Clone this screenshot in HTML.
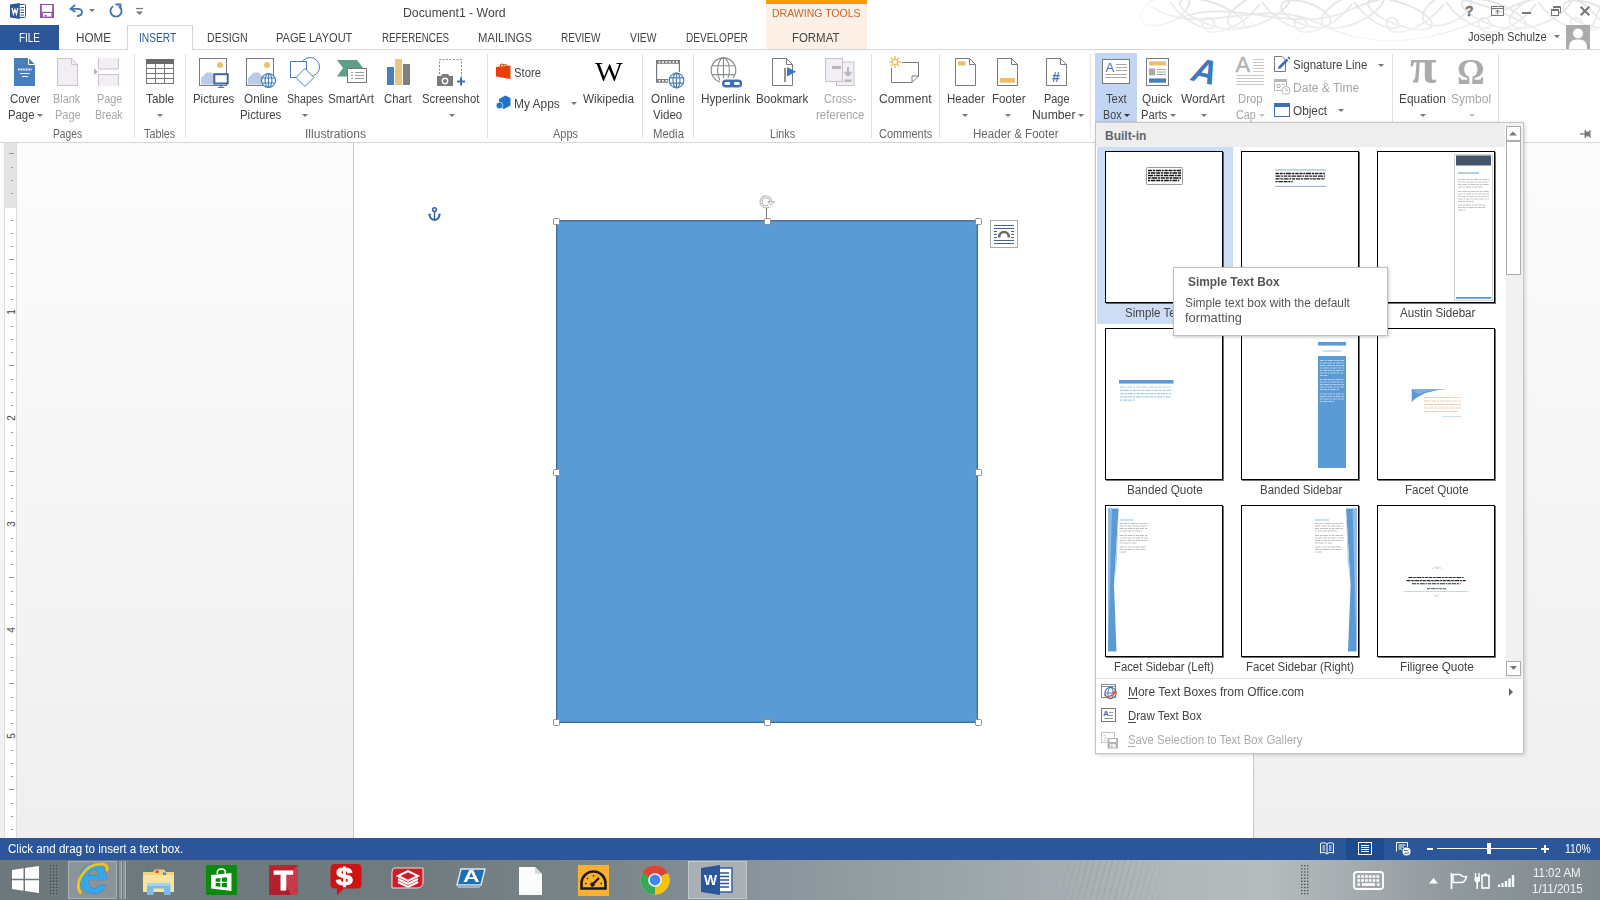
<!DOCTYPE html>
<html lang="en">
<head>
<meta charset="utf-8">
<title>Document1 - Word</title>
<style>
html,body{margin:0;padding:0;}
body{width:1600px;height:900px;overflow:hidden;position:relative;background:#fff;
  font-family:"Liberation Sans",sans-serif;font-size:12px;color:#444;}
.a{position:absolute;}
.t{position:absolute;white-space:nowrap;line-height:14px;height:14px;transform-origin:0 50%;}
.c{text-align:center;}
.dis{color:#a6a6a6;}
svg{position:absolute;overflow:visible;}
/* ---------- title + tabs ---------- */
#titlebar{left:0;top:0;width:1600px;height:50px;background:#fff;}
#ctx{left:766px;top:0;width:101px;height:49px;background:#fdf0e6;}
#ctxband{left:766px;top:0;width:101px;height:4px;background:#fd9a00;}
#tabline{left:0;top:49px;width:1600px;height:1px;background:#d5d5d5;}
#filetab{left:0;top:25px;width:59px;height:25px;background:#2b579a;}
#instab{left:127px;top:25px;width:64px;height:25px;background:#fff;border:1px solid #d5d5d5;border-bottom:none;}
.tab{top:31px;font-size:12px;color:#444;}
/* ---------- ribbon ---------- */
#ribbon{left:0;top:50px;width:1600px;height:92px;background:#fff;}
#ribline{left:0;top:142px;width:1600px;height:1px;background:#d5d5d5;}
.sep{position:absolute;top:54px;width:1px;height:84px;background:#e1e1e1;}
.gl{top:127px;color:#666;}
.rl{color:#444;}
/* ---------- document ---------- */
#doc{left:0;top:143px;width:1600px;height:695px;background:linear-gradient(#fcfcfc,#efefef);}
#page{left:353px;top:143px;width:901px;height:695px;background:#fff;border-left:1px solid #c6c6c6;border-right:1px solid #c6c6c6;box-sizing:border-box;}
#rightbg{left:1254px;top:143px;width:346px;height:695px;background:#efefef;}
#shape{left:556px;top:220px;width:422px;height:503px;background:#5b9bd5;border:1px solid #41719c;box-sizing:border-box;box-shadow:inset 0 0 0 1px rgba(65,113,156,.45);}
.h{position:absolute;width:5px;height:5px;background:#fff;border:1px solid #8f8f8f;border-radius:1.5px;}
/* ---------- status + taskbar ---------- */
#status{left:0;top:838px;width:1600px;height:22px;background:#2b579a;}
#task{left:0;top:860px;width:1600px;height:40px;background:#6f7b80;}
/* ---------- dropdown ---------- */
#dd{left:1095px;top:122px;width:427px;height:630px;background:#fff;border:1px solid #c6c6c6;box-shadow:1px 1px 4px rgba(0,0,0,.18);}
#ddhead{left:1096px;top:123px;width:409px;height:24px;background:#eeeeee;}
#ddsel{left:1097px;top:147px;width:136px;height:177px;background:#cdddf3;}
.th{position:absolute;width:116px;height:150px;border:1px solid #000;background:#fff;box-sizing:content-box;box-shadow:1px 1px 0 rgba(0,0,0,.55);}
.thl{color:#444;font-size:12px;}
</style>
</head>
<body>
<!-- TITLE BAR / TABS -->
<div class="a" id="titlebar"></div>
<div class="a" id="ctx"></div>
<div class="a" id="ctxband"></div>
<div class="a" id="tabline"></div>
<div class="a" id="filetab"></div>
<div class="a" id="instab"></div>

<!-- swirl decoration (faint) -->
<svg class="a" style="left:0;top:0" width="1600" height="49" viewBox="0 0 1600 49" fill="none" stroke="#e4e4e4" stroke-width="1.8">
<defs><linearGradient id="swf" x1="0" y1="0" x2="0" y2="1"><stop offset="0" stop-color="#fff" stop-opacity="0"/><stop offset=".55" stop-color="#fff" stop-opacity=".35"/><stop offset="1" stop-color="#fff" stop-opacity="1"/></linearGradient><linearGradient id="swl" x1="0" y1="0" x2="1" y2="0"><stop offset="0" stop-color="#fff" stop-opacity="1"/><stop offset="1" stop-color="#fff" stop-opacity="0"/></linearGradient></defs>
<ellipse cx="1165" cy="9" rx="26" ry="14" transform="rotate(-25 1165 9)"/>
<ellipse cx="1212" cy="14" rx="34" ry="11" transform="rotate(20 1212 14)"/>
<ellipse cx="1259" cy="9" rx="34" ry="14" transform="rotate(-25 1259 9)"/>
<ellipse cx="1306" cy="14" rx="26" ry="11" transform="rotate(20 1306 14)"/>
<ellipse cx="1353" cy="9" rx="34" ry="14" transform="rotate(-25 1353 9)"/>
<ellipse cx="1400" cy="14" rx="34" ry="11" transform="rotate(20 1400 14)"/>
<ellipse cx="1447" cy="9" rx="26" ry="14" transform="rotate(-25 1447 9)"/>
<ellipse cx="1494" cy="14" rx="34" ry="11" transform="rotate(20 1494 14)"/>
<ellipse cx="1541" cy="9" rx="34" ry="14" transform="rotate(-25 1541 9)"/>
<ellipse cx="1588" cy="14" rx="26" ry="11" transform="rotate(20 1588 14)"/>
<path d="M1170 2C1190 30 1220 34 1214 22C1210 14 1198 18 1204 28C1210 38 1240 30 1260 4"/>
<path d="M1262 2C1282 30 1312 34 1306 22C1302 14 1290 18 1296 28C1302 38 1332 30 1352 4"/>
<path d="M1354 2C1374 30 1404 34 1398 22C1394 14 1382 18 1388 28C1394 38 1424 30 1444 4"/>
<path d="M1446 2C1466 30 1496 34 1490 22C1486 14 1474 18 1480 28C1486 38 1516 30 1536 4"/>
<path d="M1538 2C1558 30 1588 34 1582 22C1578 14 1566 18 1572 28C1578 38 1608 30 1628 4"/>
<path d="M1150 6C1200 40 1260 -6 1320 24S1440 40 1500 12S1580 -4 1600 20"/>
<path d="M1170 22C1230 -8 1290 38 1350 10S1470 -6 1530 26S1590 30 1600 8"/>
<rect x="1120" y="0" width="480" height="49" fill="url(#swf)" stroke="none"/><rect x="1120" y="0" width="70" height="49" fill="url(#swl)" stroke="none"/></svg>
<!-- QAT icons -->
<svg style="left:10px;top:3px" width="17" height="16" viewBox="0 0 17 16">
 <rect x="8" y="1.5" width="7.5" height="13" rx="1" fill="#fff" stroke="#2b579a" stroke-width="1"/>
 <path d="M10.5 4.5h3.5M10.5 7h3.5M10.5 9.5h3.5M10.5 12h3.5" stroke="#2b579a" stroke-width="1"/>
 <path d="M0 1.4 L9.8 0 V16 L0 14.6 Z" fill="#2b579a"/>
 <path d="M2 5 L3.4 11 L4.9 6.3 L6.4 11 L7.8 5" stroke="#fff" stroke-width="1.3" fill="none"/>
</svg>
<svg style="left:40px;top:4px" width="14" height="14" viewBox="0 0 14 14">
 <path d="M0 0H14V14H0Z" fill="#9551a8"/>
 <rect x="1.8" y="1" width="10.4" height="6.8" fill="#fff"/>
 <rect x="2.8" y="9" width="8.6" height="3.6" fill="#fff"/>
 <rect x="5" y="11" width="1.8" height="1.6" fill="#9551a8"/>
</svg>
<svg style="left:69px;top:4px" width="15" height="13" viewBox="0 0 15 13" fill="none" stroke="#4472b4" stroke-width="1.8">
 <path d="M6 0.8 L1.5 4.8 L6.5 8"/><path d="M1.5 4.8 H9 C14.5 4.8 14.5 12 8 12"/>
</svg>
<svg style="left:89px;top:9px" width="6" height="3" viewBox="0 0 6 3"><path d="M0 0H6L3 3Z" fill="#777"/></svg>
<svg style="left:109px;top:3px" width="14" height="14" viewBox="0 0 14 14" fill="none" stroke="#4472b4" stroke-width="1.8">
 <path d="M4.2 3.2 A5.6 5.6 0 1 0 9.8 3.2"/><path d="M6.5 1.5 H11.5 V6.5" />
</svg>
<svg style="left:136px;top:8px" width="7" height="8" viewBox="0 0 7 8"><path d="M0 0.5H7" stroke="#777" stroke-width="1.2"/><path d="M0 3.5H7L3.5 7Z" fill="#777"/></svg>
<!-- window controls -->
<span class="t" style="left:1465px;top:4px;font-size:14px;font-weight:bold;color:#777;-webkit-text-stroke:.4px #777">?</span>
<svg style="left:1491px;top:6px" width="13" height="10" viewBox="0 0 13 10" fill="none" stroke="#777" stroke-width="1">
 <rect x=".5" y=".5" width="12" height="9"/><path d="M.5 2.5H12.5M6.5 8.5V4M4.5 6L6.5 4L8.5 6"/>
</svg>
<div class="a" style="left:1522px;top:12px;width:9px;height:2px;background:#777"></div>
<svg style="left:1551px;top:6px" width="10" height="10" viewBox="0 0 10 10" fill="none" stroke="#777" stroke-width="1">
 <path d="M2.5 2.5V.5H9.5V6.5H7.5"/><path d="M2.5 1.5H9.5" /><rect x=".5" y="3.5" width="7" height="6"/><path d="M.5 4.5H7.5"/>
</svg>
<svg style="left:1580px;top:6px" width="10" height="10" viewBox="0 0 10 10" stroke="#777" stroke-width="2.1"><path d="M.7 .7L9.3 9.3M9.3 .7L.7 9.3"/></svg>
<svg style="left:1554px;top:35px" width="6" height="3" viewBox="0 0 6 3"><path d="M0 0H6L3 3Z" fill="#777"/></svg>
<svg style="left:1566px;top:25px" width="24" height="24" viewBox="0 0 24 24">
 <rect width="24" height="24" fill="#ababab"/>
 <circle cx="12" cy="8.5" r="5" fill="#fff"/>
 <path d="M3 24 C3 15 7 14.5 12 14.5 S21 15 21 24Z" fill="#fff"/>
</svg>
<span class="t" style="left:403.00px;transform:scaleX(1.022);top:6px;">Document1 - Word</span>
<span class="t" style="left:772.20px;transform:scaleX(1.001);top:6px;font-size:10.5px;color:#c8672a;">DRAWING TOOLS</span>
<span class="t" style="left:19.00px;transform:scaleX(0.829);top:31px;color:#fff;">FILE</span>
<span class="t" style="left:76.00px;transform:scaleX(0.972);top:31px;">HOME</span>
<span class="t" style="left:139.15px;transform:scaleX(0.851);top:31px;color:#2b579a;">INSERT</span>
<span class="t" style="left:207.00px;transform:scaleX(0.882);top:31px;">DESIGN</span>
<span class="t" style="left:276.00px;transform:scaleX(0.921);top:31px;">PAGE LAYOUT</span>
<span class="t" style="left:382.00px;transform:scaleX(0.817);top:31px;">REFERENCES</span>
<span class="t" style="left:478.00px;transform:scaleX(0.942);top:31px;">MAILINGS</span>
<span class="t" style="left:561.00px;transform:scaleX(0.833);top:31px;">REVIEW</span>
<span class="t" style="left:630.00px;transform:scaleX(0.861);top:31px;">VIEW</span>
<span class="t" style="left:686.00px;transform:scaleX(0.841);top:31px;">DEVELOPER</span>
<span class="t" style="left:792.00px;transform:scaleX(0.952);top:31px;">FORMAT</span>
<span class="t" style="left:1468.00px;transform:scaleX(0.929);top:30px;">Joseph Schulze</span>

<!-- RIBBON -->
<div class="a" id="ribbon"></div>
<div class="a" id="ribline"></div>
<div class="sep" style="left:134px"></div>
<div class="sep" style="left:185px"></div>
<div class="sep" style="left:487px"></div>
<div class="sep" style="left:642px"></div>
<div class="sep" style="left:693px"></div>
<div class="sep" style="left:871px"></div>
<div class="sep" style="left:939px"></div>
<div class="sep" style="left:1090px"></div>
<div class="sep" style="left:1392px"></div>
<div class="sep" style="left:1498px"></div>
<div class="a" style="left:1095px;top:53px;width:42px;height:71px;background:#c2d5f2"></div>
<svg style="left:14px;top:58px" width="21" height="28" viewBox="0 0 21 28" ><path d="M0 0H14.5L21 6.5V28H0Z" fill="#4a7ebb"/><path d="M14.5 0V6.5H21" fill="none" stroke="#fff" stroke-width="1"/><path d="M4 11.5H17.5" stroke="#fff" stroke-width="2" stroke-dasharray="1 .6"/><path d="M6 15.5H15.5M8 18.5H14" stroke="#fff" stroke-width="1"/></svg>
<svg style="left:57px;top:58px" width="21" height="28" viewBox="0 0 21 28" ><path d="M.5 .5H14.5L20.5 6.5V27.5H.5Z" fill="#f3eef5" stroke="#c9c4cb"/><path d="M14.5 .5V6.5H20.5" fill="none" stroke="#c9c4cb"/></svg>
<svg style="left:94px;top:58px" width="25" height="28" viewBox="0 0 25 28" ><path d="M4.5 0V11H24.5V0" fill="#f3eef5" stroke="#c9c4cb"/><path d="M4.5 28V16.5H24.5V28" fill="#f3eef5" stroke="#c9c4cb"/><path d="M0 10.5L4 13.8L0 17Z" fill="#b5b5b5"/></svg>
<svg style="left:146px;top:59px" width="28" height="25" viewBox="0 0 28 25" ><rect x=".5" y=".5" width="27" height="24" fill="#fff" stroke="#7a7a7a"/><rect x="0" y="0" width="28" height="5" fill="#6a6a6a"/><path d="M9.5 5V24M18.5 5V24M0 9.5H28M0 14.5H28M0 19.5H28" stroke="#7a7a7a" fill="none"/></svg>
<svg style="left:199px;top:58px" width="31" height="31" viewBox="0 0 31 31" ><rect x=".5" y=".5" width="27" height="27" fill="#fff" stroke="#7a7a7a"/><circle cx="21" cy="7" r="3" fill="#ebc06d"/><path d="M2 26.5V20L7.5 14.5H12.5L18.5 20.5V26.5Z" fill="#b9cbe6"/><rect x="15.3" y="16.2" width="13.4" height="9.3" fill="#fff" stroke="#41659c" stroke-width="2"/><path d="M22 26.5V29M18.8 29.4H25.2" stroke="#41659c" stroke-width="1"/></svg>
<svg style="left:246px;top:58px" width="31" height="31" viewBox="0 0 31 31" ><rect x=".5" y=".5" width="27" height="27" fill="#fff" stroke="#7a7a7a"/><circle cx="21" cy="7" r="3" fill="#ebc06d"/><path d="M2 26.5V20L7.5 14.5H12.5L18.5 20.5V26.5Z" fill="#b9cbe6"/><circle cx="22.5" cy="22.5" r="7" fill="#fff" stroke="#4a7ebb" stroke-width="1.2"/><ellipse cx="22.5" cy="22.5" rx="3.4" ry="7" fill="none" stroke="#4a7ebb" stroke-width="1.2"/><path d="M22.5 15.5V29.5M16.0 20.0H29.0M16.0 25.0H29.0" stroke="#4a7ebb" stroke-width="1.2" fill="none"/></svg>
<svg style="left:290px;top:56px" width="30" height="32" viewBox="0 0 30 32" ><circle cx="20" cy="11" r="9.5" fill="#fff" stroke="#4a7ebb"/><rect x=".5" y="5.5" width="16" height="16" fill="#fff" stroke="#4a7ebb"/><path d="M15 12.5L24 21.5L15 30.5L6 21.5Z" fill="#fff" stroke="#4a7ebb"/></svg>
<svg style="left:337px;top:60px" width="31" height="24" viewBox="0 0 31 24" ><path d="M0 0H20L26 8L20 16.5H0L6 8Z" fill="#5f9e8b"/><rect x="10.5" y="8.5" width="19" height="14" fill="#fff" stroke="#7a7a7a"/><path d="M14 12.5H16M18 12.5H27M14 15.5H16M18 15.5H27M14 18.5H16M18 18.5H27" stroke="#9a9a9a"/></svg>
<svg style="left:387px;top:59px" width="23" height="26" viewBox="0 0 23 26" ><rect x="0" y="8" width="7" height="18" fill="#4a7ebb"/><rect x="8" y="0" width="7" height="26" fill="#ebc47d"/><rect x="16" y="5" width="7" height="21" fill="#7f7f7f"/></svg>
<svg style="left:437px;top:59px" width="29" height="27" viewBox="0 0 29 27" ><path d="M2.5 15V.5H24.5V22" fill="none" stroke="#8a8a8a" stroke-dasharray="2 1.5"/><path d="M0 17H4L5.5 15H11L12.5 17H16V27H0Z" fill="#7a7a7a"/><circle cx="8" cy="22" r="2.7" fill="none" stroke="#fff" stroke-width="1.4"/><path d="M20 22.5H28M24 18.5V26.5" stroke="#3e6db5" stroke-width="2"/></svg>
<svg style="left:496px;top:63px" width="15" height="17" viewBox="0 0 15 17" ><path d="M4.5 4V2.5C4.5 .5 7.5 .5 7.5 2.5V3M7.5 3C7.5 1 10.5 1 10.5 3V4" fill="none" stroke="#e8400c" stroke-width="1.2"/><path d="M0 4L14.5 2.5V16L0 13.5Z" fill="#e8400c"/></svg>
<svg style="left:496px;top:95px" width="15" height="15" viewBox="0 0 15 15" ><path d="M3 4L9.5 .5L14.5 3V10.5L8 14L3 11.5Z" fill="#1e74c8"/><circle cx="3.5" cy="10.5" r="3.3" fill="#1e74c8" stroke="#fff" stroke-width=".6"/></svg>
<span class="t" style="left:595px;top:57px;font-family:'Liberation Serif',serif;font-size:28px;line-height:30px;height:30px;color:#000;transform:scaleX(1.05)">W</span>
<svg style="left:656px;top:60px" width="32" height="29" viewBox="0 0 32 29" ><path d="M0 0H24V3.8H0ZM0 18.9H12V22.7H0Z" fill="#7a7a7a"/><path d="M.6 0V22M23.4 0V12" stroke="#7a7a7a" stroke-width="1.2"/><rect x="2.6" y="1.1" width="1.7" height="1.7" fill="#fff"/><rect x="6.1" y="1.1" width="1.7" height="1.7" fill="#fff"/><rect x="9.6" y="1.1" width="1.7" height="1.7" fill="#fff"/><rect x="13.1" y="1.1" width="1.7" height="1.7" fill="#fff"/><rect x="16.6" y="1.1" width="1.7" height="1.7" fill="#fff"/><rect x="20.1" y="1.1" width="1.7" height="1.7" fill="#fff"/><rect x="2.6" y="20" width="1.7" height="1.7" fill="#fff"/><rect x="6.1" y="20" width="1.7" height="1.7" fill="#fff"/><rect x="9.6" y="20" width="1.7" height="1.7" fill="#fff"/><circle cx="20.5" cy="20.5" r="7.3" fill="#fff" stroke="#4a7ebb" stroke-width="1.2"/><ellipse cx="20.5" cy="20.5" rx="3.5" ry="7.3" fill="none" stroke="#4a7ebb" stroke-width="1.2"/><path d="M20.5 13.2V27.8M13.7 17.9H27.3M13.7 23.1H27.3" stroke="#4a7ebb" stroke-width="1.2" fill="none"/></svg>
<svg style="left:710px;top:57px" width="34" height="32" viewBox="0 0 34 32" ><circle cx="13.5" cy="13.2" r="12.3" fill="#fff" stroke="#8a8a8a" stroke-width="1.1"/><ellipse cx="13.5" cy="13.2" rx="5.9" ry="12.3" fill="none" stroke="#8a8a8a" stroke-width="1.1"/><path d="M13.5 0.8999999999999986V25.5M2.1 8.8H24.9M2.1 17.6H24.9" stroke="#8a8a8a" stroke-width="1.1" fill="none"/><rect x="10" y="21" width="24" height="11" fill="#fff"/><rect x="13.2" y="23.7" width="10" height="5.6" rx="2.8" fill="none" stroke="#3e6fb0" stroke-width="2.4"/><rect x="21" y="23.7" width="10" height="5.6" rx="2.8" fill="none" stroke="#3e6fb0" stroke-width="2.4"/></svg>
<svg style="left:772px;top:58px" width="21" height="28" viewBox="0 0 21 28" ><path d="M.5 .5H14.5L20.5 6.5V27.5H.5Z" fill="#fff" stroke="#7a7a7a"/><path d="M14.5 .5V6.5H20.5" fill="none" stroke="#7a7a7a"/><path d="M13 10V24" stroke="#7a7a7a" stroke-width="1.6"/></svg>
<svg style="left:787px;top:67px" width="9" height="10" viewBox="0 0 9 10" ><path d="M0 0L9 4.7L0 9.4Z" fill="#3b78c3"/></svg>
<svg style="left:825px;top:58px" width="30" height="28" viewBox="0 0 30 28" ><rect x="11.5" y="4" width="17.5" height="23.5" fill="#f3eef5" stroke="#c9c4cb"/><rect x=".5" y=".5" width="17" height="23" fill="#f3eef5" stroke="#c9c4cb"/><rect x="7" y="8" width="9" height="3" fill="#b9b5bb"/><path d="M23 9V16M19.8 14L23 17.5L26.2 14" fill="none" stroke="#b9b5bb" stroke-width="2"/><rect x="19.5" y="21.5" width="7" height="2.4" fill="#b9b5bb"/></svg>
<svg style="left:889px;top:56px" width="31" height="28" viewBox="0 0 31 28" ><path d="M2.5 6.5H29.5V20L23 26.5H2.5Z" fill="#fff" stroke="#7a7a7a"/><path d="M29.5 20H23V26.5" fill="none" stroke="#7a7a7a"/><circle cx="6" cy="6" r="7" fill="#fff"/><path d="M6 6L12.0 6.0" stroke="#ecc16c" stroke-width="1.4"/><path d="M6 6L10.2 10.2" stroke="#ecc16c" stroke-width="1.4"/><path d="M6 6L6.0 12.0" stroke="#ecc16c" stroke-width="1.4"/><path d="M6 6L1.8 10.2" stroke="#ecc16c" stroke-width="1.4"/><path d="M6 6L0.0 6.0" stroke="#ecc16c" stroke-width="1.4"/><path d="M6 6L1.8 1.8" stroke="#ecc16c" stroke-width="1.4"/><path d="M6 6L6.0 0.0" stroke="#ecc16c" stroke-width="1.4"/><path d="M6 6L10.2 1.8" stroke="#ecc16c" stroke-width="1.4"/><circle cx="6" cy="6" r="2.6" fill="#fff" stroke="#ecc16c" stroke-width="1.2"/></svg>
<svg style="left:955px;top:58px" width="21" height="28" viewBox="0 0 21 28" ><path d="M.5 .5H14.5L20.5 6.5V27.5H.5Z" fill="#fff" stroke="#7a7a7a"/><path d="M14.5 .5V6.5H20.5" fill="none" stroke="#7a7a7a"/><rect x="3" y="3.3" width="7.5" height="4.2" fill="#ebc06d"/></svg>
<svg style="left:997px;top:58px" width="21" height="28" viewBox="0 0 21 28" ><path d="M.5 .5H14.5L20.5 6.5V27.5H.5Z" fill="#fff" stroke="#7a7a7a"/><path d="M14.5 .5V6.5H20.5" fill="none" stroke="#7a7a7a"/><rect x="3" y="20" width="15" height="4.7" fill="#ebc06d"/></svg>
<svg style="left:1046px;top:58px" width="21" height="28" viewBox="0 0 21 28" ><path d="M.5 .5H14.5L20.5 6.5V27.5H.5Z" fill="#fff" stroke="#7a7a7a"/><path d="M14.5 .5V6.5H20.5" fill="none" stroke="#7a7a7a"/></svg>
<span class="t" style="left:1052px;top:70px;font-size:14px;font-weight:bold;color:#3e72b8">#</span>
<svg style="left:1102px;top:59px" width="28" height="25" viewBox="0 0 28 25" ><rect x=".5" y=".5" width="27" height="24" fill="#fff" stroke="#7a7a7a"/><path d="M14 5.5H25M14 8.5H25M14 11.5H25M3 15.5H25M3 18.5H25" stroke="#a8a8a8"/></svg>
<span class="t" style="left:1105.5px;top:61px;font-size:13px;color:#3e72b8">A</span>
<svg style="left:1146px;top:58px" width="23" height="28" viewBox="0 0 23 28" ><rect x=".5" y=".5" width="22" height="27" fill="#fff" stroke="#7a7a7a"/><rect x="3" y="3.3" width="17" height="4.2" fill="#ebc06d"/><rect x="3" y="10.4" width="6" height="7" fill="#a9a9a9"/><path d="M11 11.5H20M11 14H20M11 16.5H20" stroke="#a8a8a8"/><rect x="3" y="20.4" width="17" height="4.3" fill="#4a7ebb"/></svg>
<svg style="left:1192.5px;top:54px" width="34" height="36" viewBox="0 0 34 36"><text x="4" y="30" font-family="Liberation Sans, sans-serif" font-size="34" font-weight="bold" fill="#3e79c0" transform="rotate(12 17 18) skewX(-12)">A</text></svg>
<svg style="left:1236px;top:58px" width="28" height="28" viewBox="0 0 28 28" ><path d="M17 1.5H28M17 4.5H28M17 7.5H28M17 10.5H28M17 13.5H28M0 17.5H28M0 20.5H28M0 23.5H28M0 26.5H28" stroke="#c8c8c8"/></svg>
<span class="t" style="left:1235.5px;top:54px;font-size:22px;line-height:22px;height:22px;color:#b4b4b4;-webkit-text-stroke:.5px #b4b4b4">A</span>
<svg style="left:1274px;top:56px" width="17" height="16" viewBox="0 0 17 16" ><path d="M.5 .5H8L11.5 4V15.5H.5Z" fill="#fff" stroke="#7a7a7a"/><path d="M5 12L13.5 3.5" stroke="#3e6db5" stroke-width="2.6"/><path d="M14.3 2.7L15.6 1.4" stroke="#3e6db5" stroke-width="2.6"/><path d="M3.8 13.2L5.5 12.6L4.4 11.5Z" fill="#3e6db5"/></svg>
<svg style="left:1274px;top:79px" width="17" height="16" viewBox="0 0 17 16" ><rect x=".5" y=".5" width="12" height="11" fill="#fff" stroke="#b8b8b8"/><rect x="0" y="0" width="13" height="3" fill="#b8b8b8"/><path d="M3 5.5H6V8.5H3ZM7.5 5.5H10.5" fill="none" stroke="#b8b8b8"/><circle cx="12" cy="11.5" r="4" fill="#fff" stroke="#b8b8b8"/><path d="M12 9V11.5H14" fill="none" stroke="#b8b8b8"/></svg>
<svg style="left:1274px;top:103px" width="16" height="14" viewBox="0 0 16 14" ><rect x=".5" y=".5" width="15" height="13" fill="#fff" stroke="#3e6db5"/><rect x="0" y="0" width="16" height="4" fill="#3e6db5"/></svg>
<span class="t" style="left:1409.5px;top:41px;font-family:'Liberation Serif',serif;font-size:51px;font-weight:bold;line-height:51px;height:51px;color:#ababab;transform:scaleX(.95)">π</span>
<span class="t" style="left:1456.5px;top:53px;font-family:'Liberation Serif',serif;font-size:36px;font-weight:bold;line-height:38px;height:38px;color:#ababab;transform:scaleX(.96)">Ω</span>
<span class="t" style="left:9.50px;transform:scaleX(0.945);top:92px;">Cover</span>
<span class="t" style="left:8.25px;transform:scaleX(0.944);top:108px;">Page</span>
<span class="t" style="left:52.50px;transform:scaleX(0.903);top:92px;color:#a6a6a6;">Blank</span>
<span class="t" style="left:54.50px;transform:scaleX(0.917);top:108px;color:#a6a6a6;">Page</span>
<span class="t" style="left:96.50px;transform:scaleX(0.899);top:92px;color:#a6a6a6;">Page</span>
<span class="t" style="left:94.50px;transform:scaleX(0.881);top:108px;color:#a6a6a6;">Break</span>
<span class="t" style="left:145.75px;transform:scaleX(0.982);top:92px;">Table</span>
<span class="t" style="left:192.50px;transform:scaleX(0.952);top:92px;">Pictures</span>
<span class="t" style="left:243.75px;transform:scaleX(0.978);top:92px;">Online</span>
<span class="t" style="left:239.50px;transform:scaleX(0.952);top:108px;">Pictures</span>
<span class="t" style="left:286.50px;transform:scaleX(0.885);top:92px;">Shapes</span>
<span class="t" style="left:328.25px;transform:scaleX(0.969);top:92px;">SmartArt</span>
<span class="t" style="left:384.25px;transform:scaleX(0.941);top:92px;">Chart</span>
<span class="t" style="left:422.00px;transform:scaleX(0.945);top:92px;">Screenshot</span>
<span class="t" style="left:514.00px;transform:scaleX(0.939);top:66px;">Store</span>
<span class="t" style="left:514.25px;transform:scaleX(0.996);top:97px;">My Apps</span>
<span class="t" style="left:583.25px;transform:scaleX(0.979);top:92px;">Wikipedia</span>
<span class="t" style="left:650.75px;transform:scaleX(0.978);top:92px;">Online</span>
<span class="t" style="left:653.00px;transform:scaleX(0.958);top:108px;">Video</span>
<span class="t" style="left:700.50px;transform:scaleX(0.980);top:92px;">Hyperlink</span>
<span class="t" style="left:756.25px;transform:scaleX(0.968);top:92px;">Bookmark</span>
<span class="t" style="left:823.75px;transform:scaleX(0.920);top:92px;color:#a6a6a6;">Cross-</span>
<span class="t" style="left:815.50px;transform:scaleX(0.955);top:108px;color:#a6a6a6;">reference</span>
<span class="t" style="left:878.50px;transform:scaleX(1.011);top:92px;">Comment</span>
<span class="t" style="left:946.50px;transform:scaleX(0.959);top:92px;">Header</span>
<span class="t" style="left:991.50px;transform:scaleX(0.966);top:92px;">Footer</span>
<span class="t" style="left:1044.25px;transform:scaleX(0.908);top:92px;">Page</span>
<span class="t" style="left:1031.50px;transform:scaleX(1.019);top:108px;">Number</span>
<span class="t" style="left:1105.50px;transform:scaleX(0.937);top:92px;">Text</span>
<span class="t" style="left:1102.50px;transform:scaleX(0.895);top:108px;">Box</span>
<span class="t" style="left:1142.00px;transform:scaleX(0.979);top:92px;">Quick</span>
<span class="t" style="left:1141.25px;transform:scaleX(0.937);top:108px;">Parts</span>
<span class="t" style="left:1181.25px;transform:scaleX(1.001);top:92px;">WordArt</span>
<span class="t" style="left:1237.50px;transform:scaleX(0.949);top:92px;color:#a6a6a6;">Drop</span>
<span class="t" style="left:1235.50px;transform:scaleX(0.895);top:108px;color:#a6a6a6;">Cap</span>
<span class="t" style="left:1293.25px;transform:scaleX(0.962);top:58px;">Signature Line</span>
<span class="t" style="left:1293.25px;transform:scaleX(1.003);top:81px;color:#a6a6a6;">Date &amp; Time</span>
<span class="t" style="left:1293.25px;transform:scaleX(0.983);top:104px;">Object</span>
<span class="t" style="left:1399.25px;transform:scaleX(0.990);top:92px;">Equation</span>
<span class="t" style="left:1451.25px;transform:scaleX(1.004);top:92px;color:#a6a6a6;">Symbol</span>
<span class="t" style="left:52.50px;transform:scaleX(0.852);top:127px;color:#666;">Pages</span>
<span class="t" style="left:144.25px;transform:scaleX(0.901);top:127px;color:#666;">Tables</span>
<span class="t" style="left:305.49px;transform:scaleX(1.005);top:127px;color:#666;">Illustrations</span>
<span class="t" style="left:552.50px;transform:scaleX(0.914);top:127px;color:#666;">Apps</span>
<span class="t" style="left:652.50px;transform:scaleX(0.947);top:127px;color:#666;">Media</span>
<span class="t" style="left:769.50px;transform:scaleX(0.892);top:127px;color:#666;">Links</span>
<span class="t" style="left:878.50px;transform:scaleX(0.918);top:127px;color:#666;">Comments</span>
<span class="t" style="left:972.50px;transform:scaleX(0.964);top:127px;color:#666;">Header &amp; Footer</span>
<svg style="left:37px;top:113.5px" width="6" height="3" viewBox="0 0 6 3"><path d="M0 0H6L3 3Z" fill="#777"/></svg>
<svg style="left:157px;top:113.5px" width="6" height="3" viewBox="0 0 6 3"><path d="M0 0H6L3 3Z" fill="#777"/></svg>
<svg style="left:302px;top:113.5px" width="6" height="3" viewBox="0 0 6 3"><path d="M0 0H6L3 3Z" fill="#777"/></svg>
<svg style="left:449px;top:113.5px" width="6" height="3" viewBox="0 0 6 3"><path d="M0 0H6L3 3Z" fill="#777"/></svg>
<svg style="left:571px;top:102px" width="6" height="3" viewBox="0 0 6 3"><path d="M0 0H6L3 3Z" fill="#777"/></svg>
<svg style="left:962px;top:113.5px" width="6" height="3" viewBox="0 0 6 3"><path d="M0 0H6L3 3Z" fill="#777"/></svg>
<svg style="left:1005px;top:113.5px" width="6" height="3" viewBox="0 0 6 3"><path d="M0 0H6L3 3Z" fill="#777"/></svg>
<svg style="left:1078px;top:113.5px" width="6" height="3" viewBox="0 0 6 3"><path d="M0 0H6L3 3Z" fill="#777"/></svg>
<svg style="left:1124px;top:113.5px" width="6" height="3" viewBox="0 0 6 3"><path d="M0 0H6L3 3Z" fill="#333"/></svg>
<svg style="left:1170px;top:113.5px" width="6" height="3" viewBox="0 0 6 3"><path d="M0 0H6L3 3Z" fill="#777"/></svg>
<svg style="left:1201px;top:113.5px" width="6" height="3" viewBox="0 0 6 3"><path d="M0 0H6L3 3Z" fill="#777"/></svg>
<svg style="left:1259px;top:113.5px" width="6" height="3" viewBox="0 0 6 3"><path d="M0 0H6L3 3Z" fill="#c0c0c0"/></svg>
<svg style="left:1378px;top:64px" width="6" height="3" viewBox="0 0 6 3"><path d="M0 0H6L3 3Z" fill="#777"/></svg>
<svg style="left:1338px;top:109px" width="6" height="3" viewBox="0 0 6 3"><path d="M0 0H6L3 3Z" fill="#777"/></svg>
<svg style="left:1420px;top:113.5px" width="6" height="3" viewBox="0 0 6 3"><path d="M0 0H6L3 3Z" fill="#777"/></svg>
<svg style="left:1469px;top:113.5px" width="6" height="3" viewBox="0 0 6 3"><path d="M0 0H6L3 3Z" fill="#c0c0c0"/></svg>
<svg style="left:1580px;top:130px" width="11" height="8" viewBox="0 0 11 8" ><path d="M0 4H5.5" stroke="#777" stroke-width="1.3"/><rect x="4.6" y="0" width="1.4" height="8" fill="#777"/><rect x="5.5" y="1.6" width="4" height="4.8" fill="#777"/><rect x="9.2" y=".4" width="1.4" height="7.2" fill="#777"/></svg>

<!-- DOCUMENT -->
<div class="a" id="doc"></div>
<div class="a" id="page"></div>
<div class="a" id="shape"></div>
<div class="a" style="left:4px;top:143px;width:11px;height:695px;background:#fff;border-left:1px solid #dcdcdc;border-right:1px solid #dcdcdc"></div>
<div class="a" style="left:5px;top:143px;width:11px;height:65px;background:#e4e4e4"></div>
<div class="a" style="left:9px;top:153px;width:5px;height:1px;background:#999"></div><div class="a" style="left:11px;top:167px;width:2px;height:1px;background:#999"></div><div class="a" style="left:11px;top:180px;width:2px;height:1px;background:#999"></div><div class="a" style="left:11px;top:193px;width:2px;height:1px;background:#999"></div><div class="a" style="left:11px;top:220px;width:2px;height:1px;background:#999"></div><div class="a" style="left:11px;top:233px;width:2px;height:1px;background:#999"></div><div class="a" style="left:11px;top:246px;width:2px;height:1px;background:#999"></div><div class="a" style="left:9px;top:259px;width:5px;height:1px;background:#999"></div><div class="a" style="left:11px;top:273px;width:2px;height:1px;background:#999"></div><div class="a" style="left:11px;top:286px;width:2px;height:1px;background:#999"></div><div class="a" style="left:11px;top:299px;width:2px;height:1px;background:#999"></div><div class="a" style="left:11px;top:326px;width:2px;height:1px;background:#999"></div><div class="a" style="left:11px;top:339px;width:2px;height:1px;background:#999"></div><div class="a" style="left:11px;top:352px;width:2px;height:1px;background:#999"></div><div class="a" style="left:9px;top:365px;width:5px;height:1px;background:#999"></div><div class="a" style="left:11px;top:379px;width:2px;height:1px;background:#999"></div><div class="a" style="left:11px;top:392px;width:2px;height:1px;background:#999"></div><div class="a" style="left:11px;top:405px;width:2px;height:1px;background:#999"></div><div class="a" style="left:11px;top:432px;width:2px;height:1px;background:#999"></div><div class="a" style="left:11px;top:445px;width:2px;height:1px;background:#999"></div><div class="a" style="left:11px;top:458px;width:2px;height:1px;background:#999"></div><div class="a" style="left:9px;top:471px;width:5px;height:1px;background:#999"></div><div class="a" style="left:11px;top:485px;width:2px;height:1px;background:#999"></div><div class="a" style="left:11px;top:498px;width:2px;height:1px;background:#999"></div><div class="a" style="left:11px;top:511px;width:2px;height:1px;background:#999"></div><div class="a" style="left:11px;top:538px;width:2px;height:1px;background:#999"></div><div class="a" style="left:11px;top:551px;width:2px;height:1px;background:#999"></div><div class="a" style="left:11px;top:564px;width:2px;height:1px;background:#999"></div><div class="a" style="left:9px;top:577px;width:5px;height:1px;background:#999"></div><div class="a" style="left:11px;top:591px;width:2px;height:1px;background:#999"></div><div class="a" style="left:11px;top:604px;width:2px;height:1px;background:#999"></div><div class="a" style="left:11px;top:617px;width:2px;height:1px;background:#999"></div><div class="a" style="left:11px;top:644px;width:2px;height:1px;background:#999"></div><div class="a" style="left:11px;top:657px;width:2px;height:1px;background:#999"></div><div class="a" style="left:11px;top:670px;width:2px;height:1px;background:#999"></div><div class="a" style="left:9px;top:683px;width:5px;height:1px;background:#999"></div><div class="a" style="left:11px;top:697px;width:2px;height:1px;background:#999"></div><div class="a" style="left:11px;top:710px;width:2px;height:1px;background:#999"></div><div class="a" style="left:11px;top:723px;width:2px;height:1px;background:#999"></div><div class="a" style="left:11px;top:750px;width:2px;height:1px;background:#999"></div><div class="a" style="left:11px;top:763px;width:2px;height:1px;background:#999"></div><div class="a" style="left:11px;top:776px;width:2px;height:1px;background:#999"></div><div class="a" style="left:9px;top:789px;width:5px;height:1px;background:#999"></div><div class="a" style="left:11px;top:803px;width:2px;height:1px;background:#999"></div><div class="a" style="left:11px;top:816px;width:2px;height:1px;background:#999"></div><div class="a" style="left:11px;top:829px;width:2px;height:1px;background:#999"></div>
<span class="t" style="left:5.5px;top:305px;width:12px;text-align:center;font-size:10px;color:#444;transform:rotate(-90deg);transform-origin:50% 50%">1</span>
<span class="t" style="left:5.5px;top:411px;width:12px;text-align:center;font-size:10px;color:#444;transform:rotate(-90deg);transform-origin:50% 50%">2</span>
<span class="t" style="left:5.5px;top:517px;width:12px;text-align:center;font-size:10px;color:#444;transform:rotate(-90deg);transform-origin:50% 50%">3</span>
<span class="t" style="left:5.5px;top:623px;width:12px;text-align:center;font-size:10px;color:#444;transform:rotate(-90deg);transform-origin:50% 50%">4</span>
<span class="t" style="left:5.5px;top:729px;width:12px;text-align:center;font-size:10px;color:#444;transform:rotate(-90deg);transform-origin:50% 50%">5</span>
<svg style="left:428px;top:207px" width="13" height="14" viewBox="0 0 13 14" fill="none" stroke="#3a66a7" stroke-width="1.5"><circle cx="6.5" cy="2.6" r="1.9"/><path d="M6.5 4.5V13"/><path d="M1.2 6.8C1.6 10.6 4 12.6 6.5 13C9 12.6 11.4 10.6 11.8 6.8" stroke-width="1.8"/><path d="M0.3 6.7L3.2 6.9L1.9 9Z M12.7 6.7L9.8 6.9L11.1 9Z" fill="#3a66a7" stroke="none"/></svg>
<svg style="left:758px;top:194px" width="18" height="26" viewBox="0 0 18 26" fill="none"><path d="M8.5 14V24" stroke="#7a7a7a" stroke-width="1"/><path d="M13 8.2A5 5 0 1 0 10.6 12.2" stroke="#9a9a9a" stroke-width="2.8"/><path d="M13 8.2A5 5 0 1 0 10.6 12.2" stroke="#fff" stroke-width="1.2"/><path d="M10 7.8H16.5L13.2 11.2Z" fill="#fff" stroke="#9a9a9a" stroke-width=".8"/></svg>
<div class="h" style="left:552.5px;top:217.5px"></div>
<div class="h" style="left:763.5px;top:217.5px"></div>
<div class="h" style="left:974.5px;top:217.5px"></div>
<div class="h" style="left:552.5px;top:468.5px"></div>
<div class="h" style="left:974.5px;top:468.5px"></div>
<div class="h" style="left:552.5px;top:719.0px"></div>
<div class="h" style="left:763.5px;top:719.0px"></div>
<div class="h" style="left:974.5px;top:719.0px"></div>
<div class="a" style="left:990px;top:220px;width:26px;height:26px;background:#fff;border:1px solid #ababab"></div>
<svg style="left:990px;top:220px" width="28" height="28" viewBox="0 0 28 28" fill="none"><path d="M4 5.5H24M4 8.5H24M4 20.5H24M4 23.5H24M4 11.5H7M21 11.5H24M4 14.5H7M21 14.5H24M4 17.5H7M21 17.5H24" stroke="#44648f" stroke-width="1.1"/><path d="M9.2 17.6V16.8A4.8 4.8 0 0 1 18.8 16.8V17.6" stroke="#6a6a6a" stroke-width="2.6"/></svg>

<!-- STATUS / TASKBAR -->
<div class="a" id="status"></div>
<div class="a" id="task"></div>
<span class="t" style="left:7.50px;transform:scaleX(0.966);top:842px;color:#fff;">Click and drag to insert a text box.</span>
<div class="a" style="left:1346px;top:838px;width:38px;height:22px;background:#1e4a8e"></div>
<svg style="left:1320px;top:842px" width="14" height="13" viewBox="0 0 14 13" ><path d="M.5 1.5C3 .3 5 .6 7 2C9 .6 11 .3 13.5 1.5V11C11 10 9 10.3 7 12C5 10.3 3 10 .5 11Z" fill="none" stroke="#fff" stroke-width="1"/><path d="M7 2V12M2.5 4H5M2.5 6H5M2.5 8H5M9 4H11.5M9 6H11.5M9 8H11.5" stroke="#fff" stroke-width="1"/></svg>
<svg style="left:1358px;top:842px" width="14" height="13" viewBox="0 0 14 13" ><rect x=".5" y=".5" width="13" height="12" fill="none" stroke="#fff"/><path d="M3 3.5H11M3 5.5H11M3 7.5H11M3 9.5H11" stroke="#fff"/></svg>
<svg style="left:1396px;top:842px" width="15" height="14" viewBox="0 0 15 14" ><path d="M.5 9.5V.5H11.5V5" fill="none" stroke="#fff"/><path d="M2.5 3H9.5M2.5 5H8M2.5 7H6" stroke="#fff"/><circle cx="10.5" cy="9.5" r="4" fill="#fff"/><path d="M8 8.5C9.5 7.5 11 9.5 12.5 8M8.5 11.5C10 10.5 11.5 12 13 10.5" stroke="#2b579a" stroke-width="1" fill="none"/></svg>
<div class="a" style="left:1427px;top:848px;width:6px;height:2px;background:#fff"></div>
<div class="a" style="left:1437px;top:848px;width:100px;height:1px;background:#fff"></div>
<div class="a" style="left:1487px;top:843px;width:4px;height:11px;background:#fff"></div>
<div class="a" style="left:1541px;top:848px;width:8px;height:2px;background:#fff"></div><div class="a" style="left:1544px;top:845px;width:2px;height:8px;background:#fff"></div>
<span class="t" style="left:1565.00px;transform:scaleX(0.856);top:842px;color:#fff;">110%</span>
<div class="a" style="left:0;top:860px;width:1600px;height:40px;background:linear-gradient(90deg,#6d787d 0,#707b80 25%,#7a858a 37.5%,#88939a 47%,#9fa8ab 62.5%,#afb7b9 72%,#b5bcbe 79%,#a9b1b4 83%,#8f989c 91%,#7f888c 100%)"></div>
<div class="a" style="left:1050px;top:860px;width:120px;height:40px;background:repeating-linear-gradient(105deg,rgba(70,80,86,.09) 0 1.5px,rgba(255,255,255,0) 1.5px 6px);-webkit-mask-image:linear-gradient(90deg,transparent,#000 30%,#000 70%,transparent);mask-image:linear-gradient(90deg,transparent,#000 30%,#000 70%,transparent)"></div>
<svg style="left:12px;top:866px" width="27" height="27" viewBox="0 0 27 27" ><path d="M0 4L11.5 2.3V12.8H0ZM13 2L27 0V12.8H13ZM0 14.2H11.5V24.7L0 23ZM13 14.2H27V27L13 25Z" fill="#fff"/></svg>
<svg style="left:50px;top:865px" width="9" height="31" viewBox="0 0 9 31" ><rect x="0.2" y="0.2" width="1.3" height="1.3" fill="#3a4144"/><rect x="1.2" y="1.2" width="1" height="1" fill="#fff" fill-opacity=".28"/><rect x="3.2" y="0.2" width="1.3" height="1.3" fill="#3a4144"/><rect x="4.2" y="1.2" width="1" height="1" fill="#fff" fill-opacity=".28"/><rect x="6.2" y="0.2" width="1.3" height="1.3" fill="#3a4144"/><rect x="7.2" y="1.2" width="1" height="1" fill="#fff" fill-opacity=".28"/><rect x="0.2" y="3.3" width="1.3" height="1.3" fill="#3a4144"/><rect x="1.2" y="4.3" width="1" height="1" fill="#fff" fill-opacity=".28"/><rect x="3.2" y="3.3" width="1.3" height="1.3" fill="#3a4144"/><rect x="4.2" y="4.3" width="1" height="1" fill="#fff" fill-opacity=".28"/><rect x="6.2" y="3.3" width="1.3" height="1.3" fill="#3a4144"/><rect x="7.2" y="4.3" width="1" height="1" fill="#fff" fill-opacity=".28"/><rect x="0.2" y="6.4" width="1.3" height="1.3" fill="#3a4144"/><rect x="1.2" y="7.4" width="1" height="1" fill="#fff" fill-opacity=".28"/><rect x="3.2" y="6.4" width="1.3" height="1.3" fill="#3a4144"/><rect x="4.2" y="7.4" width="1" height="1" fill="#fff" fill-opacity=".28"/><rect x="6.2" y="6.4" width="1.3" height="1.3" fill="#3a4144"/><rect x="7.2" y="7.4" width="1" height="1" fill="#fff" fill-opacity=".28"/><rect x="0.2" y="9.5" width="1.3" height="1.3" fill="#3a4144"/><rect x="1.2" y="10.5" width="1" height="1" fill="#fff" fill-opacity=".28"/><rect x="3.2" y="9.5" width="1.3" height="1.3" fill="#3a4144"/><rect x="4.2" y="10.5" width="1" height="1" fill="#fff" fill-opacity=".28"/><rect x="6.2" y="9.5" width="1.3" height="1.3" fill="#3a4144"/><rect x="7.2" y="10.5" width="1" height="1" fill="#fff" fill-opacity=".28"/><rect x="0.2" y="12.6" width="1.3" height="1.3" fill="#3a4144"/><rect x="1.2" y="13.6" width="1" height="1" fill="#fff" fill-opacity=".28"/><rect x="3.2" y="12.6" width="1.3" height="1.3" fill="#3a4144"/><rect x="4.2" y="13.6" width="1" height="1" fill="#fff" fill-opacity=".28"/><rect x="6.2" y="12.6" width="1.3" height="1.3" fill="#3a4144"/><rect x="7.2" y="13.6" width="1" height="1" fill="#fff" fill-opacity=".28"/><rect x="0.2" y="15.7" width="1.3" height="1.3" fill="#3a4144"/><rect x="1.2" y="16.7" width="1" height="1" fill="#fff" fill-opacity=".28"/><rect x="3.2" y="15.7" width="1.3" height="1.3" fill="#3a4144"/><rect x="4.2" y="16.7" width="1" height="1" fill="#fff" fill-opacity=".28"/><rect x="6.2" y="15.7" width="1.3" height="1.3" fill="#3a4144"/><rect x="7.2" y="16.7" width="1" height="1" fill="#fff" fill-opacity=".28"/><rect x="0.2" y="18.8" width="1.3" height="1.3" fill="#3a4144"/><rect x="1.2" y="19.8" width="1" height="1" fill="#fff" fill-opacity=".28"/><rect x="3.2" y="18.8" width="1.3" height="1.3" fill="#3a4144"/><rect x="4.2" y="19.8" width="1" height="1" fill="#fff" fill-opacity=".28"/><rect x="6.2" y="18.8" width="1.3" height="1.3" fill="#3a4144"/><rect x="7.2" y="19.8" width="1" height="1" fill="#fff" fill-opacity=".28"/><rect x="0.2" y="21.9" width="1.3" height="1.3" fill="#3a4144"/><rect x="1.2" y="22.9" width="1" height="1" fill="#fff" fill-opacity=".28"/><rect x="3.2" y="21.9" width="1.3" height="1.3" fill="#3a4144"/><rect x="4.2" y="22.9" width="1" height="1" fill="#fff" fill-opacity=".28"/><rect x="6.2" y="21.9" width="1.3" height="1.3" fill="#3a4144"/><rect x="7.2" y="22.9" width="1" height="1" fill="#fff" fill-opacity=".28"/><rect x="0.2" y="25.0" width="1.3" height="1.3" fill="#3a4144"/><rect x="1.2" y="26.0" width="1" height="1" fill="#fff" fill-opacity=".28"/><rect x="3.2" y="25.0" width="1.3" height="1.3" fill="#3a4144"/><rect x="4.2" y="26.0" width="1" height="1" fill="#fff" fill-opacity=".28"/><rect x="6.2" y="25.0" width="1.3" height="1.3" fill="#3a4144"/><rect x="7.2" y="26.0" width="1" height="1" fill="#fff" fill-opacity=".28"/><rect x="0.2" y="28.1" width="1.3" height="1.3" fill="#3a4144"/><rect x="1.2" y="29.1" width="1" height="1" fill="#fff" fill-opacity=".28"/><rect x="3.2" y="28.1" width="1.3" height="1.3" fill="#3a4144"/><rect x="4.2" y="29.1" width="1" height="1" fill="#fff" fill-opacity=".28"/><rect x="6.2" y="28.1" width="1.3" height="1.3" fill="#3a4144"/><rect x="7.2" y="29.1" width="1" height="1" fill="#fff" fill-opacity=".28"/></svg>
<div class="a" style="left:68px;top:861px;width:49px;height:38px;background:#8b9498;border:1px solid #a9b0b3;box-sizing:border-box"></div>
<div class="a" style="left:119px;top:861px;width:2px;height:38px;background:#8b9498;border-right:1px solid #a9b0b3"></div><div class="a" style="left:123px;top:861px;width:2px;height:38px;background:#8b9498;border-right:1px solid #a9b0b3"></div>
<span class="t" style="left:78px;top:848px;font-size:53px;line-height:53px;height:53px;font-weight:bold;color:#35a8ec;transform:scaleX(1.03);text-shadow:0 0 1px #1668b0">e</span>
<svg style="left:70px;top:860px" width="44" height="40" viewBox="0 0 44 40" ><path d="M10.5 32.5C3.5 24 14 3 33 4.2C36.5 4.8 38 7 37 10" fill="none" stroke="#f4c518" stroke-width="2.8" stroke-linecap="round"/></svg>
<svg style="left:143px;top:868px" width="32" height="27" viewBox="0 0 32 27" ><path d="M0 4H10L12 1.5H21L23 4H31V24H0Z" fill="#f3d27b"/><path d="M0 7H31V24H0Z" fill="#f8e3a3"/><rect x="4" y="1" width="3" height="2.4" fill="#22a04a"/><rect x="12.5" y="2.5" width="3" height="2.4" fill="#d8382c"/><rect x="20" y="4.5" width="3" height="2.4" fill="#2f8fd0"/><path d="M4 27V15.5H27.5V27H21V20.5H10.5V27Z" fill="#7bbdea"/><path d="M4 15.5H27.5V18H4Z" fill="#a5d4f3"/></svg>
<div class="a" style="left:205.5px;top:865px;width:31px;height:30px;background:#0c8a10"></div>
<svg style="left:209.5px;top:866.5px" width="22.6" height="26" viewBox="0 0 20 26" preserveAspectRatio="none"><path d="M6.5 7V5C6.5 1 13.5 1 13.5 5V7" fill="none" stroke="#fff" stroke-width="1.3"/><path d="M1 8L19 6V24L1 21.5Z" fill="#fff"/><path d="M5 11.5L9.2 11V14.7H5ZM10.5 10.8L15 10.2V14.7H10.5ZM5 16H9.2V19.8L5 19.3ZM10.5 16H15V20.6L10.5 20Z" fill="#0c8a10"/></svg>
<div class="a" style="left:269px;top:865px;width:29px;height:30px;background:linear-gradient(135deg,#c02a38,#a5182a)"></div>
<svg style="left:269px;top:865px" width="29" height="30" viewBox="0 0 29 30" ><path d="M0 0L12 4L29 30H0Z" fill="#b0202f" fill-opacity=".6"/><path d="M29 0V30H22L14 14Z" fill="#d8545e" fill-opacity=".55"/></svg>
<span class="t" style="left:273.5px;top:867px;font-size:27.5px;line-height:28px;height:28px;font-weight:bold;color:#fff;-webkit-text-stroke:1.1px #fff;transform:scaleX(1.12)">T</span>
<svg style="left:330px;top:864px" width="32" height="32" viewBox="0 0 32 32" ><path d="M5 0H27Q31.5 0 31.5 4.5V20Q31.5 24.5 27 24.5H14L7 31V24.5H5Q.5 24.5 .5 20V4.5Q.5 0 5 0Z" fill="#cf1212"/></svg>
<span class="t" style="left:335.8px;top:865px;font-size:23px;line-height:24px;height:24px;font-weight:bold;color:#fff;-webkit-text-stroke:.9px #fff;transform:scaleX(1.3)">$</span>
<svg style="left:392px;top:867px" width="32" height="21" viewBox="0 0 32 21" ><path d="M3 1H31V15Q31 21 25 21H0V5Q0 1 3 1Z" fill="#c8202a" stroke="#f4d8d8" stroke-width="1"/><path d="M6 9L16 4L26 9L16 14Z M6 12L16 17L26 12 M6 15L16 20L26 15" fill="none" stroke="#fff" stroke-width="2"/></svg>
<svg style="left:456px;top:868px" width="30" height="21" viewBox="0 0 30 21" ><path d="M5 1H29L25 17H1Z" fill="#1a6fb5" stroke="#dfe9f2" stroke-width="1.4"/><path d="M1 17H25L24 20H2Z" fill="#9fb2c0"/></svg>
<span class="t" style="left:463px;top:868px;font-size:17px;line-height:17px;height:17px;font-weight:bold;color:#fff;transform:scaleX(1.35)">A</span>
<svg style="left:519px;top:867px" width="23" height="28" viewBox="0 0 23 28" ><path d="M0 0H16L23 7V28H0Z" fill="#fcfcfc"/><path d="M16 0V7H23Z" fill="#d5d9db"/></svg>
<div class="a" style="left:577.5px;top:864.5px;width:31.5px;height:31px;background:#fbb034"></div>
<svg style="left:580px;top:870px" width="27" height="20" viewBox="0 0 27 20" ><path d="M1.5 18.5V13.5A12 12 0 0 1 25.5 13.5V18.5Z" fill="none" stroke="#1b1b1b" stroke-width="2.6"/><path d="M12 15L19 8" stroke="#1b1b1b" stroke-width="2.2"/><circle cx="12.5" cy="14.5" r="2.2" fill="#1b1b1b"/><path d="M5 13.5H6.5M7 8L8 9M13.5 5V6.5M20.5 13.5H22" stroke="#1b1b1b" stroke-width="1.4"/></svg>
<svg style="left:640px;top:865px" width="30" height="30" viewBox="0 0 30 30" ><circle cx="15" cy="15" r="14.5" fill="#e0e0e0"/><path d="M15 15L2.4 7.7A14.5 14.5 0 0 1 27.6 7.7Z" fill="#db4437"/><path d="M15 15L27.6 7.7A14.5 14.5 0 0 1 15 29.5Z" fill="#f4c20d"/><path d="M15 15L15 29.5A14.5 14.5 0 0 1 2.4 7.7Z" fill="#3aa757"/><path d="M15 8.5H27.9A14.5 14.5 0 0 0 2.4 7.7L8.8 12Z" fill="#db4437"/><circle cx="15" cy="15" r="6.8" fill="#fff"/><circle cx="15" cy="15" r="5.4" fill="#4285f4"/></svg>
<div class="a" style="left:687.5px;top:861px;width:59px;height:38px;background:#a9b0b3;border:1px solid #c4c9cb;box-sizing:border-box"></div>
<svg style="left:701px;top:865px" width="32" height="30" viewBox="0 0 32 30" ><rect x="14" y="3" width="17" height="24" fill="#fff" stroke="#2b579a" stroke-width="1.4"/><path d="M19 8H28M19 11.5H28M19 15H28M19 18.5H28M19 22H28" stroke="#2b579a" stroke-width="1.6"/><path d="M0 3L19 0V30L0 27Z" fill="#2b579a"/></svg>
<span class="t" style="left:703.5px;top:872px;font-size:15px;line-height:16px;height:16px;font-weight:bold;color:#fff;transform:scaleX(.92)">W</span>
<svg style="left:1301px;top:865px" width="9" height="31" viewBox="0 0 9 31" ><rect x="0.2" y="0.2" width="1.3" height="1.3" fill="#3a4144"/><rect x="1.2" y="1.2" width="1" height="1" fill="#fff" fill-opacity=".28"/><rect x="3.2" y="0.2" width="1.3" height="1.3" fill="#3a4144"/><rect x="4.2" y="1.2" width="1" height="1" fill="#fff" fill-opacity=".28"/><rect x="6.2" y="0.2" width="1.3" height="1.3" fill="#3a4144"/><rect x="7.2" y="1.2" width="1" height="1" fill="#fff" fill-opacity=".28"/><rect x="0.2" y="3.3" width="1.3" height="1.3" fill="#3a4144"/><rect x="1.2" y="4.3" width="1" height="1" fill="#fff" fill-opacity=".28"/><rect x="3.2" y="3.3" width="1.3" height="1.3" fill="#3a4144"/><rect x="4.2" y="4.3" width="1" height="1" fill="#fff" fill-opacity=".28"/><rect x="6.2" y="3.3" width="1.3" height="1.3" fill="#3a4144"/><rect x="7.2" y="4.3" width="1" height="1" fill="#fff" fill-opacity=".28"/><rect x="0.2" y="6.4" width="1.3" height="1.3" fill="#3a4144"/><rect x="1.2" y="7.4" width="1" height="1" fill="#fff" fill-opacity=".28"/><rect x="3.2" y="6.4" width="1.3" height="1.3" fill="#3a4144"/><rect x="4.2" y="7.4" width="1" height="1" fill="#fff" fill-opacity=".28"/><rect x="6.2" y="6.4" width="1.3" height="1.3" fill="#3a4144"/><rect x="7.2" y="7.4" width="1" height="1" fill="#fff" fill-opacity=".28"/><rect x="0.2" y="9.5" width="1.3" height="1.3" fill="#3a4144"/><rect x="1.2" y="10.5" width="1" height="1" fill="#fff" fill-opacity=".28"/><rect x="3.2" y="9.5" width="1.3" height="1.3" fill="#3a4144"/><rect x="4.2" y="10.5" width="1" height="1" fill="#fff" fill-opacity=".28"/><rect x="6.2" y="9.5" width="1.3" height="1.3" fill="#3a4144"/><rect x="7.2" y="10.5" width="1" height="1" fill="#fff" fill-opacity=".28"/><rect x="0.2" y="12.6" width="1.3" height="1.3" fill="#3a4144"/><rect x="1.2" y="13.6" width="1" height="1" fill="#fff" fill-opacity=".28"/><rect x="3.2" y="12.6" width="1.3" height="1.3" fill="#3a4144"/><rect x="4.2" y="13.6" width="1" height="1" fill="#fff" fill-opacity=".28"/><rect x="6.2" y="12.6" width="1.3" height="1.3" fill="#3a4144"/><rect x="7.2" y="13.6" width="1" height="1" fill="#fff" fill-opacity=".28"/><rect x="0.2" y="15.7" width="1.3" height="1.3" fill="#3a4144"/><rect x="1.2" y="16.7" width="1" height="1" fill="#fff" fill-opacity=".28"/><rect x="3.2" y="15.7" width="1.3" height="1.3" fill="#3a4144"/><rect x="4.2" y="16.7" width="1" height="1" fill="#fff" fill-opacity=".28"/><rect x="6.2" y="15.7" width="1.3" height="1.3" fill="#3a4144"/><rect x="7.2" y="16.7" width="1" height="1" fill="#fff" fill-opacity=".28"/><rect x="0.2" y="18.8" width="1.3" height="1.3" fill="#3a4144"/><rect x="1.2" y="19.8" width="1" height="1" fill="#fff" fill-opacity=".28"/><rect x="3.2" y="18.8" width="1.3" height="1.3" fill="#3a4144"/><rect x="4.2" y="19.8" width="1" height="1" fill="#fff" fill-opacity=".28"/><rect x="6.2" y="18.8" width="1.3" height="1.3" fill="#3a4144"/><rect x="7.2" y="19.8" width="1" height="1" fill="#fff" fill-opacity=".28"/><rect x="0.2" y="21.9" width="1.3" height="1.3" fill="#3a4144"/><rect x="1.2" y="22.9" width="1" height="1" fill="#fff" fill-opacity=".28"/><rect x="3.2" y="21.9" width="1.3" height="1.3" fill="#3a4144"/><rect x="4.2" y="22.9" width="1" height="1" fill="#fff" fill-opacity=".28"/><rect x="6.2" y="21.9" width="1.3" height="1.3" fill="#3a4144"/><rect x="7.2" y="22.9" width="1" height="1" fill="#fff" fill-opacity=".28"/><rect x="0.2" y="25.0" width="1.3" height="1.3" fill="#3a4144"/><rect x="1.2" y="26.0" width="1" height="1" fill="#fff" fill-opacity=".28"/><rect x="3.2" y="25.0" width="1.3" height="1.3" fill="#3a4144"/><rect x="4.2" y="26.0" width="1" height="1" fill="#fff" fill-opacity=".28"/><rect x="6.2" y="25.0" width="1.3" height="1.3" fill="#3a4144"/><rect x="7.2" y="26.0" width="1" height="1" fill="#fff" fill-opacity=".28"/><rect x="0.2" y="28.1" width="1.3" height="1.3" fill="#3a4144"/><rect x="1.2" y="29.1" width="1" height="1" fill="#fff" fill-opacity=".28"/><rect x="3.2" y="28.1" width="1.3" height="1.3" fill="#3a4144"/><rect x="4.2" y="29.1" width="1" height="1" fill="#fff" fill-opacity=".28"/><rect x="6.2" y="28.1" width="1.3" height="1.3" fill="#3a4144"/><rect x="7.2" y="29.1" width="1" height="1" fill="#fff" fill-opacity=".28"/></svg>
<svg style="left:1353px;top:871px" width="31" height="19" viewBox="0 0 31 19" ><rect x="1" y="1" width="29" height="17" rx="2.5" fill="none" stroke="#fff" stroke-width="1.8"/><path d="M4.5 5.5H26.5M4.5 9.5H26.5" stroke="#fff" stroke-width="2.4" stroke-dasharray="2.6 1.2"/><path d="M4.5 13.5H7M9 13.5H22M24 13.5H26.5" stroke="#fff" stroke-width="2.4"/></svg>
<svg style="left:1429px;top:878px" width="9" height="6" viewBox="0 0 9 6" ><path d="M0 5.5L4.5 0L9 5.5Z" fill="#fff"/></svg>
<svg style="left:1450px;top:873px" width="17" height="16" viewBox="0 0 17 16" ><path d="M1.5 0V16" stroke="#fff" stroke-width="1.8"/><path d="M3 1.5H10C12 4 14 4 16.5 3.5C15.5 7.5 13 10 10 9.5H3Z" fill="none" stroke="#fff" stroke-width="1.5"/></svg>
<svg style="left:1474px;top:873px" width="16" height="16" viewBox="0 0 16 16" ><rect x="8" y="2.5" width="7" height="12.5" fill="none" stroke="#fff" stroke-width="1.6"/><rect x="10" y="0.5" width="3" height="2" fill="#fff"/><path d="M1.5 0V4M5 0V4" stroke="#fff" stroke-width="1.4"/><path d="M.5 4H6V7.5Q6 9 3.2 9.5Q.5 9 .5 7.5Z" fill="#fff"/><path d="M3.2 9V16" stroke="#fff" stroke-width="1.6"/></svg>
<svg style="left:1498px;top:875px" width="16" height="12" viewBox="0 0 16 12" ><path d="M1 12V9.5M4.5 12V8M8 12V6M11.5 12V3.5M15 12V0" stroke="#fff" stroke-width="2.4"/></svg>
<span class="t" style="left:1532.60px;transform:scaleX(0.957);top:866px;color:#f4f4f4;">11:02 AM</span>
<span class="t" style="left:1532.00px;transform:scaleX(0.966);top:882px;color:#f4f4f4;">1/11/2015</span>

<!-- DROPDOWN -->
<div class="a" id="dd"></div>
<div class="a" id="ddhead"></div>
<div class="a" id="ddsel"></div>
<span class="t" style="left:1105.00px;transform:scaleX(1.000);top:129px;color:#5f6670;font-weight:bold;">Built-in</span>
<div class="a" style="left:1506px;top:123px;width:17px;height:555px;background:#f1f1f1"></div>
<div class="a" style="left:1506px;top:126px;width:13px;height:13px;background:#fff;border:1px solid #ababab"></div>
<svg style="left:1509px;top:131px" width="8" height="5" viewBox="0 0 8 5" ><path d="M0 4.5L4 0.5L8 4.5Z" fill="#777"/></svg>
<div class="a" style="left:1506px;top:141px;width:13px;height:132px;background:#fff;border:1px solid #ababab"></div>
<div class="a" style="left:1506px;top:661px;width:13px;height:13px;background:#fff;border:1px solid #ababab"></div>
<svg style="left:1510px;top:666px" width="7" height="4" viewBox="0 0 7 4" ><path d="M0 0H7L3.5 4Z" fill="#777"/></svg>
<div class="th" style="left:1105px;top:151px"></div>
<div class="th" style="left:1241px;top:151px"></div>
<div class="th" style="left:1377px;top:151px"></div>
<div class="th" style="left:1105px;top:328px"></div>
<div class="th" style="left:1241px;top:328px"></div>
<div class="th" style="left:1377px;top:328px"></div>
<div class="th" style="left:1105px;top:505px"></div>
<div class="th" style="left:1241px;top:505px"></div>
<div class="th" style="left:1377px;top:505px"></div>
<svg style="left:0;top:0" width="1600" height="900" viewBox="0 0 1600 900"><rect x="1146.5" y="167.5" width="36" height="17" rx="1" fill="#fff" stroke="#9a9a9a"/><path d="M1148 170.5H1181.0" stroke="#111" stroke-width="1.3" fill="none" stroke-dasharray="4 .8 2.5 .8 5 .8 1.8 .8 3.2 .8"/><path d="M1148 173H1181.0" stroke="#111" stroke-width="1.3" fill="none" stroke-dasharray="2 .8 4.6 .8 3.8 .8 2.2 .8 5 .8"/><path d="M1148 175.5H1181.0" stroke="#111" stroke-width="1.3" fill="none" stroke-dasharray="5 .8 1.6 .8 3.6 .8 2.6 .8 4.4 .8"/><path d="M1148 178H1181.0" stroke="#111" stroke-width="1.3" fill="none" stroke-dasharray="2.8 .8 5.5 .8 2 .8 4.2 .8 3 .8"/><path d="M1148 180.5H1179.3" stroke="#111" stroke-width="1.3" fill="none" stroke-dasharray="2 .8 4.6 .8 3.8 .8 2.2 .8 5 .8"/><path d="M1275 170H1326M1275 186.4H1326" stroke="#8eaacc" stroke-width="1"/><path d="M1275.5 173.5H1325.0" stroke="#1a1a1a" stroke-width="1.3" fill="none" stroke-dasharray="3.4 .8 3 .8 1.8 .8 5.2 .8 2.4 .8"/><path d="M1275.5 176.2H1325.0" stroke="#1a1a1a" stroke-width="1.3" fill="none" stroke-dasharray="5 .8 1.6 .8 3.6 .8 2.6 .8 4.4 .8"/><path d="M1275.5 178.9H1325.0" stroke="#1a1a1a" stroke-width="1.3" fill="none" stroke-dasharray="4 .8 2.5 .8 5 .8 1.8 .8 3.2 .8"/><path d="M1275.5 181.6H1292.8" stroke="#1a1a1a" stroke-width="1.3" fill="none" stroke-dasharray="2 .8 4.6 .8 3.8 .8 2.2 .8 5 .8"/><rect x="1454.5" y="154.5" width="38" height="146" fill="#fff" stroke="#d4d4d4"/><rect x="1456" y="155.5" width="35" height="10" fill="#44546a"/><path d="M1458 173H1479" stroke="#9cc3e6" stroke-width="1.6"/><path d="M1458 179.5H1489.0" stroke="#c2c2c2" stroke-width="1" fill="none" stroke-dasharray="2 .8 4.6 .8 3.8 .8 2.2 .8 5 .8"/><path d="M1458 182H1489.0" stroke="#c2c2c2" stroke-width="1" fill="none" stroke-dasharray="3.4 .8 3 .8 1.8 .8 5.2 .8 2.4 .8"/><path d="M1458 184.5H1489.0" stroke="#c2c2c2" stroke-width="1" fill="none" stroke-dasharray="2.8 .8 5.5 .8 2 .8 4.2 .8 3 .8"/><path d="M1458 187H1482.8" stroke="#c2c2c2" stroke-width="1" fill="none" stroke-dasharray="4 .8 2.5 .8 5 .8 1.8 .8 3.2 .8"/><path d="M1458 191.5H1489.0" stroke="#c2c2c2" stroke-width="1" fill="none" stroke-dasharray="2.8 .8 5.5 .8 2 .8 4.2 .8 3 .8"/><path d="M1458 194H1489.0" stroke="#c2c2c2" stroke-width="1" fill="none" stroke-dasharray="4 .8 2.5 .8 5 .8 1.8 .8 3.2 .8"/><path d="M1458 196.5H1489.0" stroke="#c2c2c2" stroke-width="1" fill="none" stroke-dasharray="3.4 .8 3 .8 1.8 .8 5.2 .8 2.4 .8"/><path d="M1458 199H1489.0" stroke="#c2c2c2" stroke-width="1" fill="none" stroke-dasharray="5 .8 1.6 .8 3.6 .8 2.6 .8 4.4 .8"/><path d="M1458 201.5H1473.5" stroke="#c2c2c2" stroke-width="1" fill="none" stroke-dasharray="4 .8 2.5 .8 5 .8 1.8 .8 3.2 .8"/><path d="M1458 205H1486.0" stroke="#c2c2c2" stroke-width="1" fill="none" stroke-dasharray="4 .8 2.5 .8 5 .8 1.8 .8 3.2 .8"/><path d="M1458 207.5H1486.0" stroke="#c2c2c2" stroke-width="1" fill="none" stroke-dasharray="3.4 .8 3 .8 1.8 .8 5.2 .8 2.4 .8"/><path d="M1458 210H1465.0" stroke="#c2c2c2" stroke-width="1" fill="none" stroke-dasharray="5 .8 1.6 .8 3.6 .8 2.6 .8 4.4 .8"/><rect x="1456" y="297" width="35" height="1.8" fill="#5b9bd5"/><rect x="1119" y="380" width="54.5" height="3.6" fill="#5b9bd5"/><path d="M1120 387H1171.0" stroke="#a9cbea" stroke-width="1.2" fill="none" stroke-dasharray="5 .8 1.6 .8 3.6 .8 2.6 .8 4.4 .8"/><path d="M1120 390.3H1171.0" stroke="#a9cbea" stroke-width="1.2" fill="none" stroke-dasharray="2.8 .8 5.5 .8 2 .8 4.2 .8 3 .8"/><path d="M1120 393.6H1171.0" stroke="#a9cbea" stroke-width="1.2" fill="none" stroke-dasharray="4 .8 2.5 .8 5 .8 1.8 .8 3.2 .8"/><path d="M1120 396.9H1171.0" stroke="#a9cbea" stroke-width="1.2" fill="none" stroke-dasharray="2 .8 4.6 .8 3.8 .8 2.2 .8 5 .8"/><path d="M1120 400.2H1135.3" stroke="#a9cbea" stroke-width="1.2" fill="none" stroke-dasharray="2 .8 4.6 .8 3.8 .8 2.2 .8 5 .8"/><rect x="1318" y="342" width="28" height="3.6" fill="#5b9bd5"/><path d="M1323 351H1341" stroke="#a9cbea" stroke-width="1.2"/><rect x="1318" y="356" width="28" height="112" fill="#5b9bd5"/><path d="M1320 360.5H1344.0" stroke="#b4d0ec" stroke-width="1" fill="none" stroke-dasharray="4 .8 2.5 .8 5 .8 1.8 .8 3.2 .8"/><path d="M1320 363H1344.0" stroke="#b4d0ec" stroke-width="1" fill="none" stroke-dasharray="2 .8 4.6 .8 3.8 .8 2.2 .8 5 .8"/><path d="M1320 365.5H1344.0" stroke="#b4d0ec" stroke-width="1" fill="none" stroke-dasharray="5 .8 1.6 .8 3.6 .8 2.6 .8 4.4 .8"/><path d="M1320 368H1344.0" stroke="#b4d0ec" stroke-width="1" fill="none" stroke-dasharray="2.8 .8 5.5 .8 2 .8 4.2 .8 3 .8"/><path d="M1320 370.5H1344.0" stroke="#b4d0ec" stroke-width="1" fill="none" stroke-dasharray="2 .8 4.6 .8 3.8 .8 2.2 .8 5 .8"/><path d="M1320 373H1344.0" stroke="#b4d0ec" stroke-width="1" fill="none" stroke-dasharray="3.4 .8 3 .8 1.8 .8 5.2 .8 2.4 .8"/><path d="M1320 375.5H1327.2" stroke="#b4d0ec" stroke-width="1" fill="none" stroke-dasharray="2.8 .8 5.5 .8 2 .8 4.2 .8 3 .8"/><path d="M1320 379.5H1344.0" stroke="#b4d0ec" stroke-width="1" fill="none" stroke-dasharray="2 .8 4.6 .8 3.8 .8 2.2 .8 5 .8"/><path d="M1320 382H1344.0" stroke="#b4d0ec" stroke-width="1" fill="none" stroke-dasharray="3.4 .8 3 .8 1.8 .8 5.2 .8 2.4 .8"/><path d="M1320 384.5H1344.0" stroke="#b4d0ec" stroke-width="1" fill="none" stroke-dasharray="2.8 .8 5.5 .8 2 .8 4.2 .8 3 .8"/><path d="M1320 387H1344.0" stroke="#b4d0ec" stroke-width="1" fill="none" stroke-dasharray="4 .8 2.5 .8 5 .8 1.8 .8 3.2 .8"/><path d="M1320 389.5H1339.2" stroke="#b4d0ec" stroke-width="1" fill="none" stroke-dasharray="3.4 .8 3 .8 1.8 .8 5.2 .8 2.4 .8"/><path d="M1320 394H1344.0" stroke="#b4d0ec" stroke-width="1" fill="none" stroke-dasharray="2 .8 4.6 .8 3.8 .8 2.2 .8 5 .8"/><path d="M1320 396.5H1344.0" stroke="#b4d0ec" stroke-width="1" fill="none" stroke-dasharray="5 .8 1.6 .8 3.6 .8 2.6 .8 4.4 .8"/><path d="M1320 399H1344.0" stroke="#b4d0ec" stroke-width="1" fill="none" stroke-dasharray="2.8 .8 5.5 .8 2 .8 4.2 .8 3 .8"/><path d="M1320 401.5H1334.4" stroke="#b4d0ec" stroke-width="1" fill="none" stroke-dasharray="2 .8 4.6 .8 3.8 .8 2.2 .8 5 .8"/><path d="M1411.7 389.3H1446.3Q1421 391 1411.7 402.3Z" fill="#5b9bd5"/><path d="M1411.7 389.3H1446.3Q1428 390 1418 394Z" fill="#7fb0de"/><path d="M1424 397.5H1461.0" stroke="#f4c7a3" stroke-width="1.1" fill="none" stroke-dasharray="5 .8 1.6 .8 3.6 .8 2.6 .8 4.4 .8"/><path d="M1424 401H1461.0" stroke="#f4c7a3" stroke-width="1.1" fill="none" stroke-dasharray="5 .8 1.6 .8 3.6 .8 2.6 .8 4.4 .8"/><path d="M1424 404.5H1461.0" stroke="#f4c7a3" stroke-width="1.1" fill="none" stroke-dasharray="2.8 .8 5.5 .8 2 .8 4.2 .8 3 .8"/><path d="M1424 408H1461.0" stroke="#f4c7a3" stroke-width="1.1" fill="none" stroke-dasharray="2.8 .8 5.5 .8 2 .8 4.2 .8 3 .8"/><path d="M1424 411.5H1457.3" stroke="#f4c7a3" stroke-width="1.1" fill="none" stroke-dasharray="4 .8 2.5 .8 5 .8 1.8 .8 3.2 .8"/><path d="M1443 416.5H1461" stroke="#c9ddf0" stroke-width="1"/><path d="M1108 508.6H1118.6L1114 585L1116.5 651.6H1108Z" fill="#5b9bd5"/><path d="M1108 508.6H1112L1109.5 600L1108 651.6Z" fill="#8fbce6"/><path d="M1118.6 508.6L1117 560L1114.5 580Z" fill="#a9cdee"/><path d="M1119.5 520H1133" stroke="#a9cbea" stroke-width="1.2"/><path d="M1119.5 523.5H1148.0" stroke="#bdbdbd" stroke-width="1" fill="none" stroke-dasharray="3.4 .8 3 .8 1.8 .8 5.2 .8 2.4 .8"/><path d="M1119.5 526H1148.0" stroke="#bdbdbd" stroke-width="1" fill="none" stroke-dasharray="5 .8 1.6 .8 3.6 .8 2.6 .8 4.4 .8"/><path d="M1119.5 528.5H1148.0" stroke="#bdbdbd" stroke-width="1" fill="none" stroke-dasharray="4 .8 2.5 .8 5 .8 1.8 .8 3.2 .8"/><path d="M1119.5 531H1142.3" stroke="#bdbdbd" stroke-width="1" fill="none" stroke-dasharray="2 .8 4.6 .8 3.8 .8 2.2 .8 5 .8"/><path d="M1119.5 535.5H1148.0" stroke="#bdbdbd" stroke-width="1" fill="none" stroke-dasharray="4 .8 2.5 .8 5 .8 1.8 .8 3.2 .8"/><path d="M1119.5 538H1148.0" stroke="#bdbdbd" stroke-width="1" fill="none" stroke-dasharray="2 .8 4.6 .8 3.8 .8 2.2 .8 5 .8"/><path d="M1119.5 540.5H1148.0" stroke="#bdbdbd" stroke-width="1" fill="none" stroke-dasharray="5 .8 1.6 .8 3.6 .8 2.6 .8 4.4 .8"/><path d="M1119.5 543H1136.6" stroke="#bdbdbd" stroke-width="1" fill="none" stroke-dasharray="2.8 .8 5.5 .8 2 .8 4.2 .8 3 .8"/><path d="M1119.5 547H1146.0" stroke="#bdbdbd" stroke-width="1" fill="none" stroke-dasharray="5 .8 1.6 .8 3.6 .8 2.6 .8 4.4 .8"/><path d="M1119.5 549.5H1146.0" stroke="#bdbdbd" stroke-width="1" fill="none" stroke-dasharray="4 .8 2.5 .8 5 .8 1.8 .8 3.2 .8"/><path d="M1119.5 552H1126.1" stroke="#bdbdbd" stroke-width="1" fill="none" stroke-dasharray="2 .8 4.6 .8 3.8 .8 2.2 .8 5 .8"/><path d="M1356.6 508.6H1346L1350.6 585L1348 651.6H1356.6Z" fill="#5b9bd5"/><path d="M1356.6 508.6H1352.6L1355 600L1356.6 651.6Z" fill="#8fbce6"/><path d="M1346 508.6L1347.6 560L1350 580Z" fill="#a9cdee"/><path d="M1315 520H1329" stroke="#a9cbea" stroke-width="1.2"/><path d="M1315 523.5H1343.5" stroke="#bdbdbd" stroke-width="1" fill="none" stroke-dasharray="3.4 .8 3 .8 1.8 .8 5.2 .8 2.4 .8"/><path d="M1315 526H1343.5" stroke="#bdbdbd" stroke-width="1" fill="none" stroke-dasharray="5 .8 1.6 .8 3.6 .8 2.6 .8 4.4 .8"/><path d="M1315 528.5H1343.5" stroke="#bdbdbd" stroke-width="1" fill="none" stroke-dasharray="4 .8 2.5 .8 5 .8 1.8 .8 3.2 .8"/><path d="M1315 531H1337.8" stroke="#bdbdbd" stroke-width="1" fill="none" stroke-dasharray="2 .8 4.6 .8 3.8 .8 2.2 .8 5 .8"/><path d="M1315 535.5H1343.5" stroke="#bdbdbd" stroke-width="1" fill="none" stroke-dasharray="4 .8 2.5 .8 5 .8 1.8 .8 3.2 .8"/><path d="M1315 538H1343.5" stroke="#bdbdbd" stroke-width="1" fill="none" stroke-dasharray="2 .8 4.6 .8 3.8 .8 2.2 .8 5 .8"/><path d="M1315 540.5H1343.5" stroke="#bdbdbd" stroke-width="1" fill="none" stroke-dasharray="5 .8 1.6 .8 3.6 .8 2.6 .8 4.4 .8"/><path d="M1315 543H1332.1" stroke="#bdbdbd" stroke-width="1" fill="none" stroke-dasharray="2.8 .8 5.5 .8 2 .8 4.2 .8 3 .8"/><path d="M1315 547H1342.0" stroke="#bdbdbd" stroke-width="1" fill="none" stroke-dasharray="5 .8 1.6 .8 3.6 .8 2.6 .8 4.4 .8"/><path d="M1315 549.5H1342.0" stroke="#bdbdbd" stroke-width="1" fill="none" stroke-dasharray="4 .8 2.5 .8 5 .8 1.8 .8 3.2 .8"/><path d="M1315 552H1321.8" stroke="#bdbdbd" stroke-width="1" fill="none" stroke-dasharray="2 .8 4.6 .8 3.8 .8 2.2 .8 5 .8"/><path d="M1432 570C1433 567 1435 566 1436 569M1436 569C1436.5 565.5 1437.5 565.5 1438 569M1438 569C1439 566 1441 567 1442 570" stroke="#cfd8e0" stroke-width="1" fill="none"/><path d="M1408.5 577.5H1463.5M1406.5 580.6H1466M1412 583.7H1460.5" stroke="#2a2a2a" stroke-width="1.15" stroke-dasharray="4 .7 2.5 .7 5 .7 1.8 .7 3.2 .7"/><path d="M1427 588.7H1446" stroke="#555" stroke-width="1" stroke-dasharray="3 .7 5 .7 2 .7"/><path d="M1404 591.5H1468.5" stroke="#c6d6e6" stroke-width="1"/><path d="M1434 594.5L1436.5 597L1439 594.5" stroke="#c6c6c6" stroke-width="1" fill="none"/></svg>
<span class="t" style="left:1125.00px;transform:scaleX(0.965);top:306px;">Simple Text Box</span>
<span class="t" style="left:1265.00px;transform:scaleX(1.004);top:306px;">Austin Quote</span>
<span class="t" style="left:1399.60px;transform:scaleX(0.966);top:306px;">Austin Sidebar</span>
<span class="t" style="left:1127.30px;transform:scaleX(0.978);top:483px;">Banded Quote</span>
<span class="t" style="left:1260.00px;transform:scaleX(0.956);top:483px;">Banded Sidebar</span>
<span class="t" style="left:1405.00px;transform:scaleX(0.964);top:483px;">Facet Quote</span>
<span class="t" style="left:1114.40px;transform:scaleX(0.943);top:660px;">Facet Sidebar (Left)</span>
<span class="t" style="left:1246.40px;transform:scaleX(0.947);top:660px;">Facet Sidebar (Right)</span>
<span class="t" style="left:1400.00px;transform:scaleX(0.978);top:660px;">Filigree Quote</span>
<div class="a" style="left:1096px;top:678px;width:426px;height:1px;background:#e1e1e1"></div>
<span class="t" style="left:1128.30px;transform:scaleX(0.995);top:685px;">More Text Boxes from Office.com</span>
<span class="t" style="left:1128.30px;transform:scaleX(0.955);top:709px;">Draw Text Box</span>
<span class="t" style="left:1128.30px;transform:scaleX(0.949);top:733px;color:#ababab;">Save Selection to Text Box Gallery</span>
<div class="a" style="left:1128px;top:698px;width:10px;height:1px;background:#444"></div><div class="a" style="left:1128px;top:722px;width:8px;height:1px;background:#444"></div><div class="a" style="left:1128px;top:746px;width:7px;height:1px;background:#ababab"></div>
<svg style="left:1509px;top:688px" width="4" height="8" viewBox="0 0 4 8" ><path d="M0 0L4 4L0 8Z" fill="#666"/></svg>
<svg style="left:1101px;top:684px" width="18" height="16" viewBox="0 0 18 16" ><rect x=".5" y=".5" width="14" height="13" fill="#fff" stroke="#8a8a8a"/><path d="M.5 2.5H14.5" stroke="#8a8a8a"/><circle cx="9.5" cy="9" r="5.6" fill="#fff" stroke="#3e6db5" stroke-width="1.1"/><ellipse cx="9.5" cy="9" rx="2.6" ry="5.6" fill="none" stroke="#3e6db5" stroke-width=".9"/><path d="M4 9H15" stroke="#3e6db5" stroke-width=".9"/><path d="M3.2 10.5C5 14 11 13 14.8 7.5M14.8 7.5L11.8 7.8M14.8 7.5L14.6 10.4" stroke="#e8602c" stroke-width="1.5" fill="none"/></svg>
<svg style="left:1101px;top:708px" width="15" height="14" viewBox="0 0 15 14" ><rect x=".5" y=".5" width="14" height="13" fill="#fff" stroke="#7a7a7a"/><path d="M8 4.5H12M8 7.5H12M3 10.5H12" stroke="#9a9a9a"/></svg>
<span class="t" style="left:1103px;top:707px;font-size:8px;font-weight:bold;color:#3e6db5">A</span>
<svg style="left:1101px;top:731px" width="18" height="18" viewBox="0 0 18 18" ><rect x=".5" y="1.5" width="13" height="10" fill="#fff" stroke="#c4c4c4"/><path d="M2.5 4.5H4.5M2.5 7H6M2.5 9.5H5" stroke="#c8c8c8"/><rect x="6.5" y="7" width="10.5" height="10.5" fill="#b5b5b5"/><rect x="8.5" y="8" width="6.5" height="3" fill="#fff"/><rect x="9" y="13.3" width="5.5" height="3.2" fill="#fff"/><rect x="10" y="14" width="1.6" height="2.5" fill="#b5b5b5"/></svg>
<div class="a" style="left:1173px;top:267px;width:213px;height:67px;background:#fff;border:1px solid #c0c0c0;box-shadow:1px 1px 3px rgba(0,0,0,.22)"></div>
<span class="t" style="left:1188.00px;transform:scaleX(0.991);top:275px;color:#555;font-weight:bold;">Simple Text Box</span>
<span class="t" style="left:1185.40px;transform:scaleX(0.993);top:296px;color:#555;">Simple text box with the default</span>
<span class="t" style="left:1185.40px;transform:scaleX(1.067);top:311px;color:#555;">formatting</span>

</body>
</html>
